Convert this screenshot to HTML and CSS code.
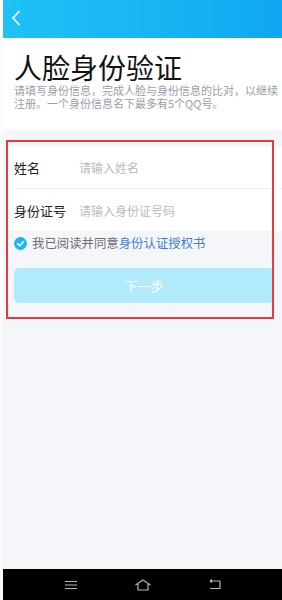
FILE: index.html
```html
<!DOCTYPE html>
<html lang="zh-CN">
<head>
<meta charset="utf-8">
<title>人脸身份验证</title>
<link rel="stylesheet" href="styles.css">
</head>
<body>
<div class="app">
  <header class="topbar">
    <svg class="back" width="10" height="16" viewBox="0 0 10 16"><path d="M8 1.5 L2 8 L8 14.5" fill="none" stroke="#fff" stroke-width="1.8" stroke-linecap="round" stroke-linejoin="round"/></svg>
  </header>
  <section class="intro">
    <h1 class="title">人脸身份验证</h1>
    <p class="desc">请填写身份信息，完成人脸与身份信息的比对，以继续注册。一个身份信息名下最多有5个QQ号。</p>
  </section>
  <main class="content">
    <div class="card">
      <div class="row">
        <span class="label">姓名</span>
        <span class="placeholder">请输入姓名</span>
      </div>
      <div class="row">
        <span class="label">身份证号</span>
        <span class="placeholder">请输入身份证号码</span>
      </div>
    </div>
    <div class="agree">
      <svg class="check" width="13" height="13" viewBox="0 0 12 12"><circle cx="6" cy="6" r="6" fill="#1bb7f3"/><path d="M3.2 6.1 L5.2 8 L8.9 4.2" fill="none" stroke="#fff" stroke-width="1.4" stroke-linecap="round" stroke-linejoin="round"/></svg>
      <span class="agree-text">我已阅读并同意<span class="link">身份认证授权书</span></span>
    </div>
    <div class="btn">下一步</div>
  </main>
  <nav class="navbar">
    <svg width="14" height="10" viewBox="0 0 14 10"><path d="M1 1.5 H13 M1 5 H13 M1 8.5 H13" stroke="#b5b5b5" stroke-width="1.2"/></svg>
    <svg width="18" height="12" viewBox="0 0 18 12"><path d="M1.5 6 L9 1 L16.5 6 M4 5 V11 H14 V5" fill="none" stroke="#b5b5b5" stroke-width="1.2" stroke-linejoin="round"/></svg>
    <svg width="14" height="11" viewBox="0 0 14 11"><path d="M2 2 H12 V9.5 H2 M2 2 L4 0.5 M2 2 L4 3.5" fill="none" stroke="#b5b5b5" stroke-width="1.2" stroke-linejoin="round"/></svg>
  </nav>
</div>
<div class="annot"></div>
</body>
</html>
```

FILE: styles.css
```css
html, body {
  margin: 0;
  padding: 0;
}
body {
  background: #fbfbfc;
  padding-left: 3px;
  width: 279px;
  height: 600px;
  overflow: hidden;
  position: relative;
  font-family: "Noto Sans CJK SC", "Noto Sans", sans-serif;
}
.app {
  width: 279px;
  height: 600px;
  display: flex;
  flex-direction: column;
  background: #f5f6f9;
}
.topbar {
  height: 38px;
  flex: none;
  background: linear-gradient(90deg, #1fc1f6 0%, #17b3f3 60%, #10a6f1 100%);
  display: flex;
  align-items: center;
  padding-left: 8px;
}
.back {
  display: block;
  margin-top: -2px;
}
.intro {
  background: #fff;
  padding: 15px 2px 20px 11px;
}
.title {
  margin: 0;
  font-size: 28px;
  line-height: 28px;
  font-weight: 400;
  color: #121212;
}
.desc {
  margin: 3px 0 0;
  font-size: 11px;
  line-height: 13px;
  color: #99a0aa;
}
.content {
  flex: 1;
  padding-top: 17px;
}
.card {
  background: #fff;
  margin-left: 5px;
}
.row {
  height: 42px;
  display: flex;
  align-items: center;
  margin-left: 6px;
  border-bottom: 1px solid #f0f1f3;
  box-sizing: border-box;
}
.row:last-child {
  border-bottom: none;
}
.label {
  width: 65px;
  font-size: 13px;
  color: #1e1e1e;
}
.placeholder {
  font-size: 12px;
  color: #b7bbc2;
}
.agree {
  height: 24px;
  display: flex;
  align-items: center;
  padding-left: 11px;
  gap: 5px;
}
.check {
  display: block;
}
.agree-text {
  font-size: 12.4px;
  color: #6a6f77;
}
.link {
  color: #3b7fd9;
}
.btn {
  margin: 13px 8px 0 11px;
  height: 35px;
  border-radius: 5px;
  background: #b1ebfb;
  color: #fff;
  font-size: 13px;
  display: flex;
  align-items: center;
  justify-content: center;
}
.navbar {
  height: 31px;
  flex: none;
  background: #000;
  display: flex;
  align-items: center;
  justify-content: center;
  gap: 56px;
}
.navbar svg {
  display: block;
}
.annot {
  position: absolute;
  left: 6px;
  top: 140px;
  width: 264px;
  height: 175px;
  border: 2px solid #e53a3f;
}
```
